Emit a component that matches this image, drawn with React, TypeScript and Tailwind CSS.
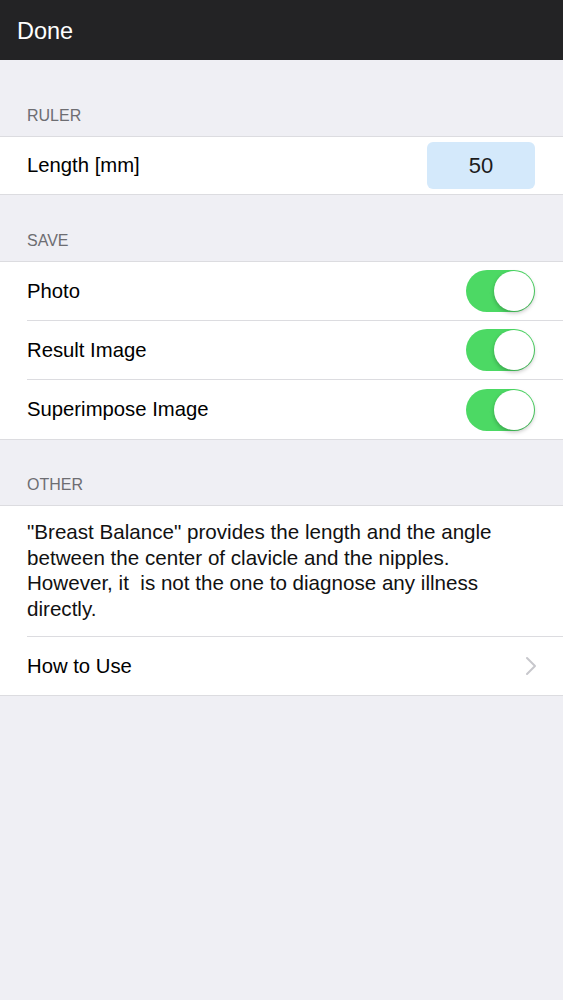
import React from 'react';

const font = { fontFamily: '"Liberation Sans", Arial, sans-serif' };

const SectionHeader: React.FC<{ title: string; height: string }> = ({ title, height }) => (
  <div className={`flex items-end px-[27px] pb-[10px] ${height}`}>
    <span className="text-[16px] leading-[20px] text-[#6d6d72] uppercase">{title}</span>
  </div>
);

const Toggle: React.FC = () => (
  <div className="relative h-[42px] w-[69px] rounded-full bg-[#4cd964]">
    <div className="absolute right-[1px] top-[1px] h-[40px] w-[40px] rounded-full bg-white shadow-[0_2px_4px_rgba(0,0,0,0.25)]" />
  </div>
);

const Row: React.FC<{ children: React.ReactNode; last?: boolean }> = ({ children, last }) => (
  <div className="pl-[27px]">
    <div
      className={`flex h-[59px] items-center justify-between pr-[28px] ${last ? '' : 'border-b border-[#dcdce0]'}`}
    >
      {children}
    </div>
  </div>
);

export default function App() {
  const saveItems = ['Photo', 'Result Image', 'Superimpose Image'];

  return (
    <div className="min-h-[1000px] w-full bg-[#efeff4] text-black" style={font}>
      <div className="flex h-[60px] items-center bg-[#232325] px-[17px] pt-[3px]">
        <span className="text-[23.5px] text-white">Done</span>
      </div>

      <SectionHeader title="Ruler" height="h-[76px]" />
      <div className="border-y border-[#dcdce0] bg-white">
        <div className="flex h-[57px] items-center justify-between pl-[27px] pr-[28px]">
          <span className="text-[20.3px]">Length [mm]</span>
          <div className="flex h-[47px] w-[108px] items-center justify-center rounded-[6px] bg-[#d4e9fb] text-[22px] text-[#1c1c1c]">
            50
          </div>
        </div>
      </div>

      <SectionHeader title="Save" height="h-[66px]" />
      <div className="border-y border-[#dcdce0] bg-white">
        {saveItems.map((label, i) => (
          <Row key={label} last={i === saveItems.length - 1}>
            <span className="text-[20.3px]">{label}</span>
            <Toggle />
          </Row>
        ))}
      </div>

      <SectionHeader title="Other" height="h-[65px]" />
      <div className="border-y border-[#dcdce0] bg-white">
        <div className="pl-[27px]">
          <div className="border-b border-[#dcdce0] pb-[15px] pr-[10px] pt-[13px]">
            <p className="whitespace-pre-wrap text-[20.6px] leading-[25.5px] text-[#111]">
              {'"Breast Balance" provides the length and the angle\nbetween the center of clavicle and the nipples.\nHowever, it  is not the one to diagnose any illness\ndirectly.'}
            </p>
          </div>
        </div>
        <div className="flex h-[58px] items-center justify-between pl-[27px] pr-[26px]">
          <span className="text-[20.3px]">How to Use</span>
          <svg width="12" height="20" viewBox="0 0 12 20" fill="none">
            <path d="M2 2l8 8-8 8" stroke="#c7c7cc" strokeWidth="2" strokeLinecap="round" strokeLinejoin="round" />
          </svg>
        </div>
      </div>
    </div>
  );
}
